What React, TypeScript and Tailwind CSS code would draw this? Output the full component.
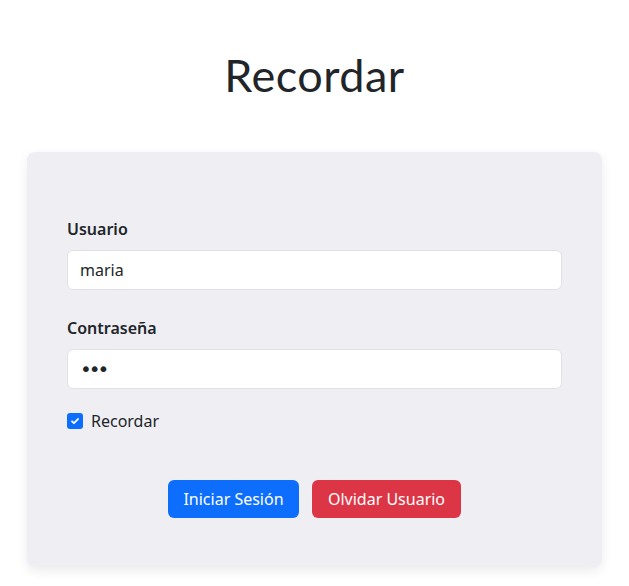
import React, { useState } from 'react';

const App: React.FC = () => {
  const [usuario, setUsuario] = useState('maria');
  const [password, setPassword] = useState('abc');
  const [recordar, setRecordar] = useState(true);

  return (
    <div className="min-h-screen bg-white text-[#212529]" style={{ fontFamily: '"Noto Sans", sans-serif' }}>
      <div className="flex flex-col items-center px-[27px] pt-[50px]">
        <h1 className="text-[45px] leading-[50px] font-normal tracking-[0.5px] text-[#212529]" style={{ fontFamily: 'Lato, sans-serif' }}>
          Recordar
        </h1>
        <div className="mt-[52px] w-full rounded-lg bg-[#efeff3] px-10 pt-[65px] pb-[49px] shadow-[0_4px_12px_rgba(0,0,0,0.08)]">
          <label className="block text-[16px] leading-6 font-semibold mb-[9px]">Usuario</label>
          <input
            className="block w-full h-10 rounded-md border border-[#dee2e6] bg-white px-3 text-[16px] text-[#212529] outline-none"
            value={usuario}
            onChange={(e) => setUsuario(e.target.value)}
          />
          <label className="block mt-[26px] text-[16px] leading-6 font-semibold mb-[9px]">Contraseña</label>
          <input
            type="password"
            className="block w-full h-10 rounded-md border border-[#dee2e6] bg-white px-3 font-['DejaVu_Sans'] text-[20px] tracking-[-3px] text-[#212529] outline-none"
            value={password}
            onChange={(e) => setPassword(e.target.value)}
          />
          <label className="mt-[20px] flex items-center gap-2 text-[16px] leading-6 cursor-pointer">
            <span
              onClick={() => setRecordar(!recordar)}
              className={recordar ? 'flex h-4 w-4 items-center justify-center rounded-[3px] bg-[#0d6efd]' : 'flex h-4 w-4 items-center justify-center rounded-[3px] border border-[#adb5bd] bg-white'}
            >
              {recordar && (
                <svg width="12" height="12" viewBox="0 0 20 20">
                  <path d="M5 10.5l3.2 3.2 6.8-7" fill="none" stroke="#fff" strokeWidth="3" strokeLinecap="round" strokeLinejoin="round" />
                </svg>
              )}
            </span>
            Recordar
          </label>
          <div className="mt-[47px] flex justify-center gap-[13px]">
            <button className="h-[38px] w-[131px] rounded-md bg-[#0d6efd] text-[16px] text-white">Iniciar Sesión</button>
            <button className="h-[38px] w-[149px] rounded-md bg-[#dc3545] text-[16px] text-white">Olvidar Usuario</button>
          </div>
        </div>
      </div>
    </div>
  );
};

export default App;
